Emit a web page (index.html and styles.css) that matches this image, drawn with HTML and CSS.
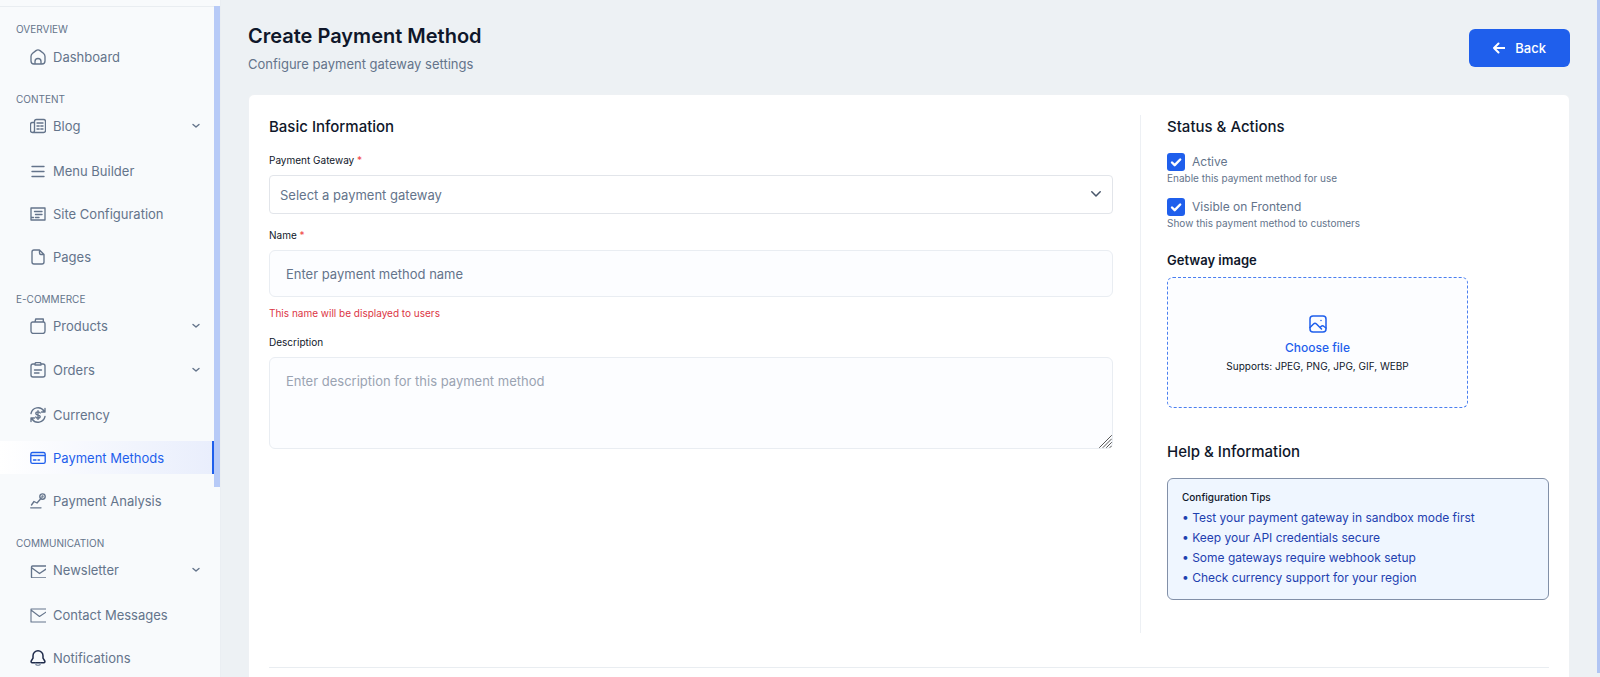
FILE: index.html
```html
<!DOCTYPE html>
<html lang="en">
<head>
<meta charset="utf-8">
<meta name="viewport" content="width=device-width, initial-scale=1">
<title>Create Payment Method</title>
<link rel="stylesheet" href="styles.css">
</head>
<body>
<div class="app">
  <aside class="sidebar">
    <div class="sidebar-top"></div>
    <nav class="nav" aria-label="Main">
      <section class="nav-section">
        <h2 class="nav-title">OVERVIEW</h2>
        <a class="nav-item" href="#"><svg class="icon" viewBox="0 0 16 16"><path d="M1 7.500C1 6 1.500 5.200 2.600 4.300L6 1.600c1.400-1 2.600-1 4 0l3.400 2.700C14.500 5.200 15 6 15 7.500V12a3 3 0 0 1-3 3H4a3 3 0 0 1-3-3zM5 15v-2.500a3 3 0 0 1 6 0V15"/></svg>Dashboard</a>
      </section>
      <section class="nav-section">
        <h2 class="nav-title">CONTENT</h2>
        <button class="nav-item nav-parent" type="button"><svg class="icon" viewBox="0 0 16 16"><path d="M4.500 3.500a2 2 0 0 1 2-2h7a2 2 0 0 1 2 2v9a2 2 0 0 1-2 2h-11a2 2 0 0 0 2-2zM4.500 4.500h-2a2 2 0 0 0-2 2v6a2 2 0 0 0 2 2M7 5h6M7 8h2.200M10.800 8H13M7 11h2.200M10.800 11H13"/></svg>Blog<svg class="caret" viewBox="0 0 8 8"><path d="m1 2.500 3 2.500 3-2.500"/></svg></button>
        <a class="nav-item" href="#"><svg class="icon" viewBox="0 0 16 16"><path d="M2 3.500h12M2 8.500h12M2 13.500h12"/></svg>Menu Builder</a>
        <a class="nav-item" href="#"><svg class="icon" viewBox="0 0 16 16"><path d="M1 2h14v12H1zM4.500 5.500H12M5.500 8.500H12M1.500 11.500h2M5.500 11.500H9"/></svg>Site Configuration</a>
        <a class="nav-item" href="#"><svg class="icon" viewBox="0 0 16 16"><path d="M4 1h5.500L14 5.500V13a2 2 0 0 1-2 2H4a2 2 0 0 1-2-2V3a2 2 0 0 1 2-2zM9.500 1v3a1.500 1.500 0 0 0 1.500 1.500h3"/></svg>Pages</a>
      </section>
      <section class="nav-section">
        <h2 class="nav-title">E-COMMERCE</h2>
        <button class="nav-item nav-parent" type="button"><svg class="icon" viewBox="0 0 16 16"><path d="M2.700 4h10.600A1.700 1.700 0 0 1 15 5.700V13a2.500 2.500 0 0 1-2.500 2.500h-9A2.500 2.500 0 0 1 1 13V5.700A1.700 1.700 0 0 1 2.700 4zM5 4l.7-3h7.600v3"/></svg>Products<svg class="caret" viewBox="0 0 8 8"><path d="m1 2.500 3 2.500 3-2.500"/></svg></button>
        <button class="nav-item nav-parent" type="button"><svg class="icon" viewBox="0 0 16 16"><path d="M5 2H3a2 2 0 0 0-2 2v9a2 2 0 0 0 2 2h10a2 2 0 0 0 2-2V4a2 2 0 0 0-2-2h-2M5 3V2a1.500 1.500 0 0 1 1.500-1.500h3A1.500 1.500 0 0 1 11 2v1zM4.500 8h7M4.500 11h4.500"/></svg>Orders<svg class="caret" viewBox="0 0 8 8"><path d="m1 2.500 3 2.500 3-2.500"/></svg></button>
        <a class="nav-item" href="#"><svg class="icon" viewBox="0 0 16 16"><path d="M1 6.500A7.200 7.200 0 0 1 14 4M15 1.500V5h-3.500M15 9.500A7.200 7.200 0 0 1 2 12M1 14.500V11h3.500M10.200 6c-.3-.8-1-1.200-2.200-1.200-1.400 0-2.200.6-2.200 1.600 0 2.200 4.400 1 4.400 3.200 0 1-.8 1.600-2.200 1.600-1.200 0-1.900-.4-2.200-1.200M8 3.600v8.800"/></svg>Currency</a>
        <a class="nav-item nav-active" href="#" aria-current="page"><svg class="icon" viewBox="0 0 16 16"><path d="M2.500 2.500h11A1.700 1.700 0 0 1 15.200 4v7.700a1.700 1.700 0 0 1-1.700 1.700h-11A1.700 1.700 0 0 1 .8 11.700V4a1.700 1.700 0 0 1 1.700-1.500zM1 5.500h14M3.500 10H6M8 10h1.500"/></svg>Payment Methods</a>
        <a class="nav-item" href="#"><svg class="icon" viewBox="0 0 16 16"><path d="M.7 14.800H11M1.500 12l2.500-3.500 3 1.500 3.300-3.800.9-1.300"/><circle cx="12.500" cy="3.500" r="2.700"/><circle cx="12.500" cy="3.500" r=".5"/></svg>Payment Analysis</a>
      </section>
      <section class="nav-section">
        <h2 class="nav-title">COMMUNICATION</h2>
        <button class="nav-item nav-parent" type="button"><svg class="icon" viewBox="0 0 16 16"><path d="M17 4H2.500A1 1 0 0 0 1.500 5v10a1 1 0 0 0 1 1H17M2 6l7.500 5.500L17 6.500"/></svg>Newsletter<svg class="caret" viewBox="0 0 8 8"><path d="m1 2.500 3 2.500 3-2.500"/></svg></button>
        <a class="nav-item" href="#"><svg class="icon icon-thin" viewBox="0 0 16 16"><path d="M17 2H1v13h16M1 3l8.500 6.500L17 4.500"/></svg>Contact Messages</a>
        <a class="nav-item" href="#"><svg class="icon icon-dark" viewBox="0 0 16 16"><path d="M8 .8a5 5 0 0 0-5 5v2.400L1.200 11c-.4.800 0 1.700 1 1.700h11.600c1 0 1.400-.9 1-1.700L13 8.200V5.800a5 5 0 0 0-5-5z"/><path class="clapper" d="M5.500 13.500a2.600 2.600 0 0 0 5 0"/></svg>Notifications</a>
      </section>
    </nav>
    <div class="side-thumb"></div>
  </aside>

  <main class="main">
    <header class="page-head">
      <div>
        <h1 class="page-title">Create Payment Method</h1>
        <p class="page-sub">Configure payment gateway settings</p>
      </div>
      <button class="btn-back" type="button"><svg class="arrow" viewBox="0 0 12 12"><path d="M11.500 6H1M5.500 1.500 1 6l4.500 4.500"/></svg>Back</button>
    </header>

    <form class="card">
      <div class="columns">
        <section class="col-main">
          <h2 class="heading">Basic Information</h2>
          <div class="field">
            <label class="label" for="gateway">Payment Gateway <span class="req">*</span></label>
            <div class="control">
              <select class="select" id="gateway"><option>Select a payment gateway</option></select>
              <svg class="select-caret" viewBox="0 0 10 10"><path d="m.8 2.800 4.200 4.200 4.200-4.200"/></svg>
            </div>
          </div>
          <div class="field">
            <label class="label" for="name">Name <span class="req">*</span></label>
            <input class="input" id="name" type="text" placeholder="Enter payment method name">
            <p class="hint">This name will be displayed to users</p>
          </div>
          <div class="field">
            <label class="label" for="description">Description</label>
            <div class="control">
              <textarea class="input textarea" id="description" placeholder="Enter description for this payment method"></textarea>
              <svg class="grip" viewBox="0 0 13 13"><path d="M.5 12.500 12.500.5M4 12.500 12.500 4M7.500 12.500l5-5M11 12.500l1.500-1.500"/></svg>
            </div>
          </div>
        </section>

        <section class="col-side">
          <h2 class="heading">Status &amp; Actions</h2>
          <div class="checks">
            <div>
              <label class="check"><span class="tick"><input class="box" type="checkbox" checked><svg class="mark" viewBox="0 0 18 18"><path d="m5 9.500 2.700 2.700L13.200 6.500"/></svg></span>Active</label>
              <p class="note">Enable this payment method for use</p>
            </div>
            <div>
              <label class="check"><span class="tick"><input class="box" type="checkbox" checked><svg class="mark" viewBox="0 0 18 18"><path d="m5 9.500 2.700 2.700L13.200 6.500"/></svg></span>Visible on Frontend</label>
              <p class="note">Show this payment method to customers</p>
            </div>
          </div>
          <h3 class="subheading">Getway image</h3>
          <label class="drop">
            <input class="file" type="file">
            <svg class="drop-icon" viewBox="0 0 18 18"><rect x="1" y="1" width="16" height="16" rx="3"/><path d="M1 12.500 4.500 9c1-1 2-1 3 0l5 5M11 12.500l1-1c1-1 2-1 3 0l2 1.500M12 5.500h.01"/></svg>
            <span class="drop-title">Choose file</span>
            <span class="drop-note">Supports: JPEG, PNG, JPG, GIF, WEBP</span>
          </label>
          <h2 class="heading">Help &amp; Information</h2>
          <div class="tips">
            <h3 class="tips-title">Configuration Tips</h3>
            <ul class="tips-list">
              <li>• Test your payment gateway in sandbox mode first</li>
              <li>• Keep your API credentials secure</li>
              <li>• Some gateways require webhook setup</li>
              <li>• Check currency support for your region</li>
            </ul>
          </div>
        </section>
      </div>
      <div class="form-foot"></div>
    </form>
  </main>
  <div class="page-thumb"></div>
</div>
</body>
</html>
```

FILE: styles.css
```css
* { box-sizing: border-box; margin: 0; padding: 0; }
body { font-family: Inter, "Liberation Sans", sans-serif; font-size: 13px; color: #0f172a; background: #edf1f4; }
button, input, select, textarea { font: inherit; color: inherit; }
h1, h2, h3 { font-weight: 500; }
svg { fill: none; stroke: currentColor; stroke-linecap: round; stroke-linejoin: round; flex: none; }

.app { position: relative; display: flex; height: 100vh; overflow: hidden; }

.sidebar { position: relative; flex: none; width: 221px; background: #f8fafc; border-right: 1px solid #eaeef2; color: #64748b; overflow: hidden; }
.sidebar-top { height: 7px; border-bottom: 1px solid #e9edf1; }
.nav { display: flex; flex-direction: column; gap: 18px; padding-top: 14px; }
.nav-section { display: flex; flex-direction: column; gap: 10px; }
.nav-title { margin: 0 0 -7px 16px; font-size: 10px; line-height: 16px; font-weight: 400; }
.nav-item { display: flex; align-items: center; gap: 7px; width: 214px; height: 33px; padding: 0 14px 0 30px; border: 0; background: none; color: inherit; text-align: left; text-decoration: none; line-height: 20px; }
.nav-parent { height: 34px; padding-bottom: 2px; }
.nav-active { color: #1f5fec; background: linear-gradient(90deg, #fff, #e9eefc); border-right: 2px solid #1f5fec; }
.icon { width: 16px; height: 16px; stroke-width: 1.35; }
.icon-thin { stroke-width: 1.1; }
.icon-dark { color: #1e2a4a; stroke-width: 1.5; }
.clapper { stroke: #8b97aa; }
.caret { width: 8px; height: 8px; margin-left: auto; stroke-width: 1.4; }
.side-thumb { position: absolute; top: 6px; right: 0; width: 6px; height: 481px; background: #b7caf7; }
.page-thumb { position: absolute; top: 0; right: 0; bottom: 4px; width: 3px; background: #b1c5f3; }

.main { flex: 1; min-width: 0; display: flex; flex-direction: column; padding: 22px 30px 0 27px; }
.page-head { display: flex; justify-content: space-between; align-items: center; padding-bottom: 20px; }
.page-title { font-size: 20px; line-height: 28px; font-weight: 600; }
.page-sub { margin-top: 4px; line-height: 20px; color: #64748b; }
.btn-back { display: flex; align-items: center; gap: 10px; height: 38px; padding: 0 24px; border: 0; border-radius: 6px; background: #1f5fec; color: #fff; font-weight: 500; }
.arrow { width: 12px; height: 12px; stroke-width: 2; }

.card { flex: 1 0 auto; padding: 20px; background: #fff; border: 1px solid #eef1f4; border-radius: 6px; }
.columns { display: flex; }
.col-main { flex: 1; min-width: 0; padding-right: 27px; }
.col-side { flex: none; width: 409px; padding: 0 0 33px 26px; border-left: 1px solid #edf0f4; }
.heading { font-size: 15px; line-height: 24px; }
.field { display: flex; flex-direction: column; margin-top: 13px; }
.label { margin-bottom: 7px; font-size: 10px; line-height: 16px; }
.req { color: #ef4444; }
.control { position: relative; display: flex; }
.select { flex: 1; height: 39px; padding: 0 10px; border: 1px solid #e2e5ea; border-radius: 4px; background: #fff; color: #64748b; appearance: none; }
.select-caret { position: absolute; right: 12px; top: 14px; width: 10px; height: 10px; color: #475569; stroke-width: 1.5; }
.input { height: 47px; padding: 0 16px; border: 1px solid #e9edf2; border-radius: 6px; background: #fcfdff; }
.input::placeholder { color: #64748b; opacity: 1; }
.textarea { flex: 1; height: 92px; padding: 13px 16px; line-height: 20px; resize: none; }
.textarea::placeholder { color: #9aa3b2; }
.grip { position: absolute; right: 1px; bottom: 1px; width: 13px; height: 13px; color: #555; stroke-width: 1; }
.hint { margin-top: 8px; font-size: 10px; line-height: 16px; color: #dc3545; }

.checks { display: flex; flex-direction: column; gap: 13px; margin-top: 14px; }
.check { display: flex; align-items: center; gap: 7px; font-size: 12px; line-height: 18px; color: #64748b; }
.tick { position: relative; display: flex; }
.box { width: 18px; height: 18px; appearance: none; border-radius: 3px; background: #1f5fec; }
.mark { position: absolute; inset: 0; color: #fff; stroke-width: 2.4; pointer-events: none; }
.note { font-size: 10px; line-height: 14px; color: #64748b; }
.subheading { margin-top: 20px; font-size: 13px; line-height: 20px; font-weight: 600; }
.drop { display: flex; flex-direction: column; align-items: center; justify-content: center; width: 301px; height: 131px; margin: 7px 0 32px; padding-top: 4px; border: 1px dashed #4a7ff0; border-radius: 6px; background: #fcfdff; }
.file { position: absolute; opacity: 0; width: 1px; height: 1px; }
.drop-icon { width: 18px; height: 18px; color: #1f5fec; stroke-width: 1.5; }
.drop-title { margin-top: 6px; font-size: 12px; line-height: 18px; font-weight: 500; color: #1f5fec; }
.drop-note { font-size: 10px; line-height: 18px; }
.tips { margin-top: 14px; padding: 9px 14px 11px; border: 1px solid #8290a8; border-radius: 6px; background: #eff6ff; }
.tips-title { margin-bottom: 2px; font-size: 10px; line-height: 18px; }
.tips-list { list-style: none; color: #1e40af; font-size: 12px; line-height: 20px; }
.form-foot { margin-top: 34px; padding-top: 40px; border-top: 1px solid #e9edf1; }
```
